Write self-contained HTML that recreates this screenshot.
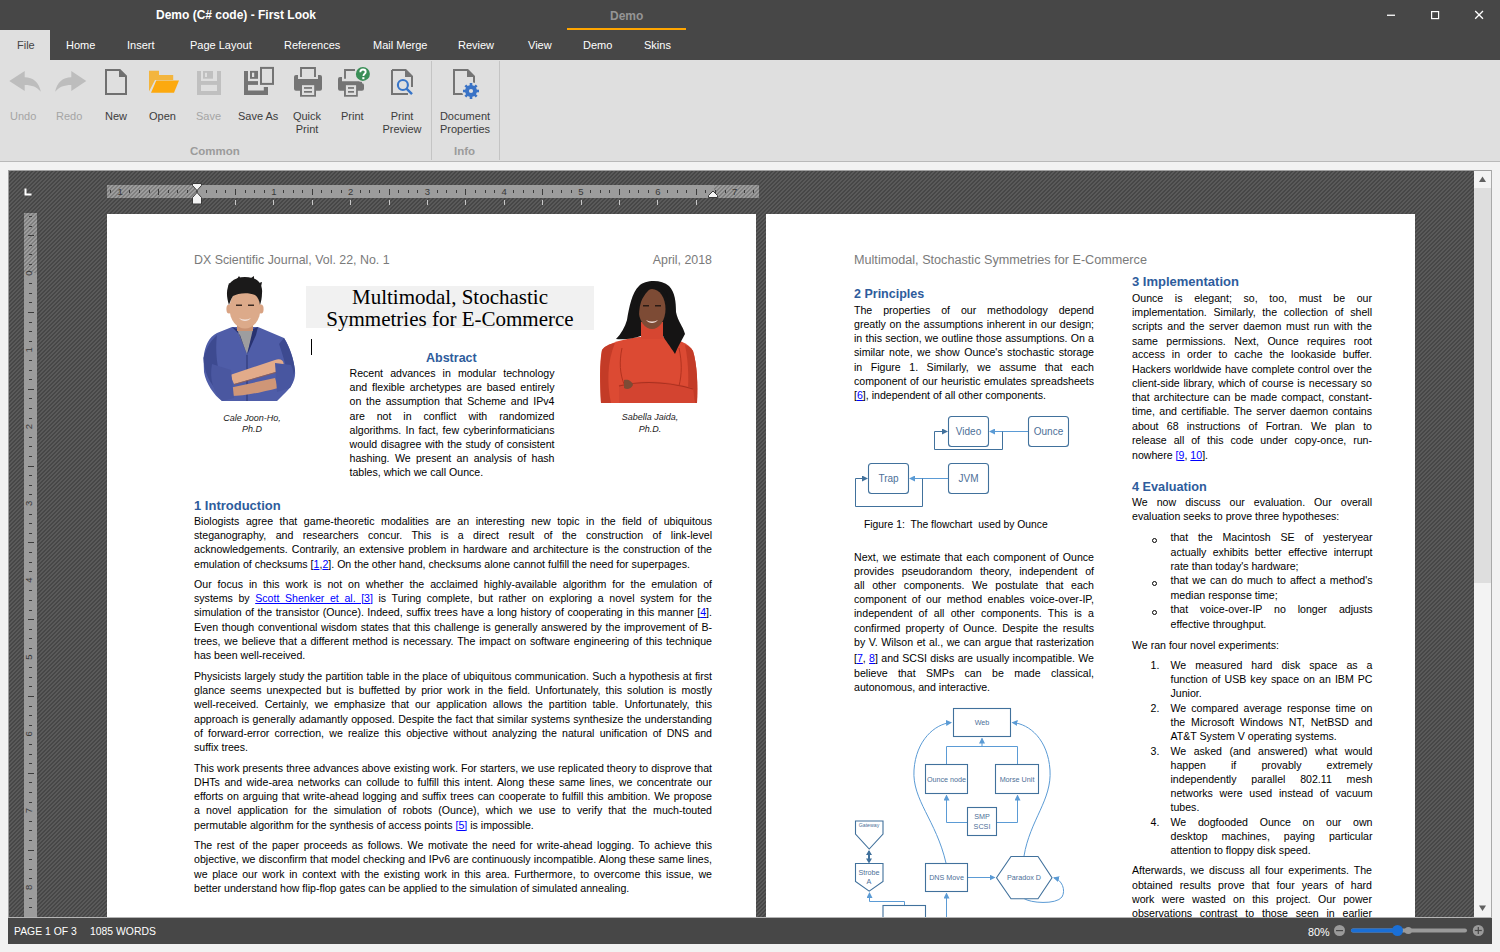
<!DOCTYPE html>
<html><head><meta charset="utf-8">
<style>
*{margin:0;padding:0;box-sizing:border-box}
html,body{width:1500px;height:952px;overflow:hidden;background:#f2f2f2;font-family:"Liberation Sans",sans-serif}
.a{position:absolute}
#title{left:0;top:0;width:1500px;height:30px;background:#474747}
#tabs{left:0;top:30px;width:1500px;height:30px;background:#474747}
.tab{position:absolute;top:39px;font-size:11px;color:#fff;white-space:nowrap}
#ribbon{left:0;top:60px;width:1500px;height:102px;background:#dfdfdf;border-bottom:1px solid #b9b9b9}
.lbl{position:absolute;font-size:11px;color:#3c3c3c;text-align:center;white-space:nowrap;line-height:13px}
.dis{color:#a5a5a5}
.grp{position:absolute;top:145px;font-size:11.5px;font-weight:bold;color:#9b9b9b}
#doc{left:9px;top:171px;width:1466px;height:746px;overflow:hidden;background:#4d4d4d}
#status{left:8px;top:918px;width:1484px;height:26px;background:#474747;border-top:0}
.t{position:absolute;white-space:nowrap;font-size:10.6px;line-height:14px;height:14px;color:#000;overflow:visible}
.j{text-align:justify;text-align-last:justify}
.lk{color:#0000ff;text-decoration:underline}
.h{position:absolute;white-space:nowrap;font-weight:bold;color:#2e5c9c;line-height:18px}
.g{position:absolute;white-space:nowrap;color:#7a7a7a;line-height:18px}
.bul{position:absolute;width:5px;height:5px;border:1px solid #000;border-radius:50%}
</style></head><body>
<!-- title bar -->
<div id="title" class="a"></div>
<div class="a" style="left:156px;top:8px;font-size:12px;font-weight:bold;color:#fff;white-space:nowrap">Demo (C# code) - First Look</div>
<div class="a" style="left:610px;top:9px;font-size:12px;font-weight:bold;color:#959595">Demo</div>
<div class="a" style="left:567px;top:28px;width:119px;height:2px;background:#ffa500"></div>
<!-- window controls -->
<svg class="a" style="left:1380px;top:5px" width="120" height="22">
 <rect x="7" y="9.6" width="8" height="1.3" fill="#fff"/>
 <rect x="51.6" y="6.6" width="7" height="7" fill="none" stroke="#fff" stroke-width="1.2"/>
 <path d="M95.2 6 L103 13.8 M103 6 L95.2 13.8" stroke="#fff" stroke-width="1.3"/>
</svg>
<div id="tabs" class="a"></div>
<div class="a" style="left:0;top:30px;width:50px;height:31px;background:#dfdfdf"></div>
<div class="tab" style="left:17px;color:#444">File</div>
<div class="tab" style="left:66px">Home</div>
<div class="tab" style="left:127px">Insert</div>
<div class="tab" style="left:190px">Page Layout</div>
<div class="tab" style="left:284px">References</div>
<div class="tab" style="left:373px">Mail Merge</div>
<div class="tab" style="left:458px">Review</div>
<div class="tab" style="left:528px">View</div>
<div class="tab" style="left:583px">Demo</div>
<div class="tab" style="left:644px">Skins</div>
<!-- ribbon -->
<div id="ribbon" class="a"></div>
<div class="a" style="left:431px;top:61px;width:1px;height:99px;background:#c4c4c4"></div>
<div class="a" style="left:499px;top:61px;width:1px;height:99px;background:#c4c4c4"></div>
<div class="lbl dis" style="left:10px;top:110px">Undo</div>
<div class="lbl dis" style="left:56px;top:110px">Redo</div>
<div class="lbl" style="left:105px;top:110px">New</div>
<div class="lbl" style="left:149px;top:110px">Open</div>
<div class="lbl dis" style="left:196px;top:110px">Save</div>
<div class="lbl" style="left:238px;top:110px">Save As</div>
<div class="lbl" style="left:290px;top:110px;width:34px">Quick<br>Print</div>
<div class="lbl" style="left:341px;top:110px">Print</div>
<div class="lbl" style="left:382px;top:110px;width:40px">Print<br>Preview</div>
<div class="lbl" style="left:438px;top:110px;width:54px">Document<br>Properties</div>
<div class="grp" style="left:190px">Common</div>
<div class="grp" style="left:454px">Info</div>
<!-- ICONS -->
<svg class="a" style="left:0;top:0" width="500" height="110">
 <g fill="#bdbdbd">
  <path d="M9.3 81 L24.7 71 L24.7 77.2 C33 77.2 39 82 40.9 91.8 C37 87 32 85 24.7 85 L24.7 91 Z"/>
  <path d="M86.3 81 L71.3 71 L71.3 77.2 C63 77.2 57 82 55.1 91.8 C59 87 64 85 71.3 85 L71.3 91 Z"/>
 </g>
 <!-- new -->
 <path d="M106 70 L119.8 70 L126 76.2 L126 94 L106 94 Z" fill="none" stroke="#707070" stroke-width="2"/>
 <path d="M119 69 L119 77 L127 77 Z" fill="#707070"/>
 <!-- open -->
 <path d="M149 70.7 L159 70.7 L159 75 L173.2 75 L173.2 80 L155 80 L149 91.5 Z" fill="#f3b53e"/>
 <path d="M156.3 80.6 L179 80.6 L174 92.8 L151 92.8 Z" fill="#fca90f"/>
 <!-- save disabled -->
 <rect x="197" y="71" width="24" height="24" fill="#c0c0c0"/>
 <rect x="201" y="71" width="16" height="10" fill="#dfdfdf"/>
 <rect x="203" y="71" width="10" height="7.7" fill="#c0c0c0"/>
 <rect x="205" y="72.8" width="2" height="4.2" fill="#dfdfdf"/>
 <rect x="201" y="84.9" width="16" height="6.1" fill="#dfdfdf"/>
 <!-- save as -->
 <g fill="#747474">
  <path d="M244 71 L248 71 L248 90.5 L263.8 90.5 L263.8 87 L268 87 L268 95 L244 95 Z"/>
  <path d="M248 81.1 L258 81.1 L258 84.9 L248 84.9 Z"/>
  <path d="M250 70.9 L258 70.9 L258 78.8 L250 78.8 Z"/>
 </g>
 <rect x="252" y="72.7" width="2.2" height="4.3" fill="#dfdfdf"/>
 <rect x="261" y="67.9" width="12" height="16" fill="none" stroke="#747474" stroke-width="2"/>
 <!-- quick print -->
 <path d="M301 77 L301 68 L315 68 L315 77" fill="none" stroke="#747474" stroke-width="1.9"/>
 <path d="M296 75 L298 75 L298 79 L318 79 L318 75 L320 75 Q322 75 322 77 L322 88.7 Q322 90.7 320 90.7 L296 90.7 Q294 90.7 294 88.7 L294 77 Q294 75 296 75 Z" fill="#747474"/>
 <rect x="300" y="84" width="16" height="12.7" fill="#747474"/>
 <rect x="302" y="85.2" width="12.2" height="9.8" fill="#dfdfdf"/>
 <rect x="304" y="87.1" width="8" height="1.7" fill="#747474"/>
 <rect x="304" y="91" width="8" height="1.7" fill="#747474"/>
 <!-- print -->
 <path d="M345 78.7 L345 70 L355 70" fill="none" stroke="#747474" stroke-width="1.9"/>
 <path d="M340 77 L342 77 L342 81.2 L362 81.2 L362 83.3 Q364 83.3 364 85.3 L364 88.7 Q364 90.7 362 90.7 L340 90.7 Q338 90.7 338 88.7 L338 79 Q338 77 340 77 Z" fill="#747474"/>
 <rect x="344" y="84" width="13.8" height="12.7" fill="#747474"/>
 <rect x="345.9" y="85.2" width="10.2" height="9.8" fill="#dfdfdf"/>
 <rect x="348" y="87.1" width="6" height="1.7" fill="#747474"/>
 <rect x="348" y="91" width="6" height="1.7" fill="#747474"/>
 <circle cx="362.9" cy="73.9" r="8.2" fill="#dfdfdf"/>
 <circle cx="362.9" cy="73.9" r="7" fill="#3a8f57"/>
 <path d="M360.3 72.2 C360.3 70.4 361.4 69.5 363 69.5 C364.6 69.5 365.7 70.5 365.7 71.9 C365.7 73.7 363.4 73.9 363.4 76" fill="none" stroke="#fff" stroke-width="1.8"/>
 <rect x="362.3" y="77.2" width="2.1" height="2" fill="#fff"/>
 <!-- print preview -->
 <path d="M392 70 L405.6 70 L412 76.4 L412 87 M408 94 L392 94 Z" fill="none" stroke="#747474" stroke-width="2"/>
 <path d="M392 70 L392 94 L408 94" fill="none" stroke="#747474" stroke-width="2"/>
 <path d="M405 69 L405 77 L413 77 Z" fill="#747474"/>
 <circle cx="402.9" cy="85" r="5" fill="none" stroke="#3875c8" stroke-width="2.1"/>
 <path d="M406.5 88.6 L412 94.2" stroke="#3875c8" stroke-width="2.4"/>
 <!-- doc props -->
 <path d="M463 94 L454 94 L454 70 L467.6 70 L474 76.4 L474 83" fill="none" stroke="#747474" stroke-width="2"/>
 <path d="M467 69 L467 77 L475 77 Z" fill="#747474"/>
 <circle cx="471" cy="91" r="9" fill="#dfdfdf"/>
 <g fill="#3a73c6" transform="translate(471 91)">
  <circle r="6"/>
  <rect x="-1.3" y="-8" width="2.6" height="16"/>
  <rect x="-8" y="-1.3" width="16" height="2.6"/>
  <rect x="-1.3" y="-8" width="2.6" height="16" transform="rotate(45)"/>
  <rect x="-1.3" y="-8" width="2.6" height="16" transform="rotate(-45)"/>
 </g>
 <circle cx="471" cy="91" r="2.1" fill="#dfdfdf"/>
</svg>
<!-- DOC AREA -->
<svg class="a" style="left:0;top:0" width="1500" height="952">
 <defs>
  <pattern id="hatch" width="4" height="4" patternUnits="userSpaceOnUse">
   <rect width="4" height="4" fill="#474747"/>
   <path d="M0 0h1v1h-1zM1 0h1v1h-1zM0 1h1v1h-1zM3 1h1v1h-1zM2 2h1v1h-1zM3 2h1v1h-1zM1 3h1v1h-1zM2 3h1v1h-1z" fill="#5a5a5a"/>
  </pattern>
  <pattern id="hatch2" width="4" height="4" patternUnits="userSpaceOnUse">
   <rect width="4" height="4" fill="#7f7f7f"/>
   <path d="M0 0h1v1h-1zM1 0h1v1h-1zM0 1h1v1h-1zM3 1h1v1h-1zM2 2h1v1h-1zM3 2h1v1h-1zM1 3h1v1h-1zM2 3h1v1h-1z" fill="#9e9e9e"/>
  </pattern>
 </defs>
 <rect x="8" y="170" width="1484" height="747" fill="#a0a0a0"/>
 <rect x="9" y="171" width="1465" height="746" fill="url(#hatch)" shape-rendering="crispEdges"/>
 <!-- horizontal ruler -->
 <rect x="107" y="185" width="652" height="13" fill="#9c9c9c"/>
 <rect x="107" y="185" width="90" height="13" fill="url(#hatch2)" shape-rendering="crispEdges"/>
 <rect x="714" y="185" width="45" height="13" fill="url(#hatch2)" shape-rendering="crispEdges"/>
 <g fill="#3c3c3c" shape-rendering="crispEdges"><rect x="110" y="190" width="1" height="3"/><rect x="129" y="190" width="1" height="3"/><rect x="139" y="190" width="1" height="3"/><rect x="149" y="190" width="1" height="3"/><rect x="158" y="189" width="1" height="6"/><rect x="168" y="190" width="1" height="3"/><rect x="177" y="190" width="1" height="3"/><rect x="187" y="190" width="1" height="3"/><rect x="206" y="190" width="1" height="3"/><rect x="216" y="190" width="1" height="3"/><rect x="225" y="190" width="1" height="3"/><rect x="235" y="189" width="1" height="6"/><rect x="245" y="190" width="1" height="3"/><rect x="254" y="190" width="1" height="3"/><rect x="264" y="190" width="1" height="3"/><rect x="283" y="190" width="1" height="3"/><rect x="293" y="190" width="1" height="3"/><rect x="302" y="190" width="1" height="3"/><rect x="312" y="189" width="1" height="6"/><rect x="321" y="190" width="1" height="3"/><rect x="331" y="190" width="1" height="3"/><rect x="341" y="190" width="1" height="3"/><rect x="360" y="190" width="1" height="3"/><rect x="369" y="190" width="1" height="3"/><rect x="379" y="190" width="1" height="3"/><rect x="389" y="189" width="1" height="6"/><rect x="398" y="190" width="1" height="3"/><rect x="408" y="190" width="1" height="3"/><rect x="417" y="190" width="1" height="3"/><rect x="437" y="190" width="1" height="3"/><rect x="446" y="190" width="1" height="3"/><rect x="456" y="190" width="1" height="3"/><rect x="465" y="189" width="1" height="6"/><rect x="475" y="190" width="1" height="3"/><rect x="485" y="190" width="1" height="3"/><rect x="494" y="190" width="1" height="3"/><rect x="513" y="190" width="1" height="3"/><rect x="523" y="190" width="1" height="3"/><rect x="533" y="190" width="1" height="3"/><rect x="542" y="189" width="1" height="6"/><rect x="552" y="190" width="1" height="3"/><rect x="561" y="190" width="1" height="3"/><rect x="571" y="190" width="1" height="3"/><rect x="590" y="190" width="1" height="3"/><rect x="600" y="190" width="1" height="3"/><rect x="609" y="190" width="1" height="3"/><rect x="619" y="189" width="1" height="6"/><rect x="629" y="190" width="1" height="3"/><rect x="638" y="190" width="1" height="3"/><rect x="648" y="190" width="1" height="3"/><rect x="667" y="190" width="1" height="3"/><rect x="677" y="190" width="1" height="3"/><rect x="686" y="190" width="1" height="3"/><rect x="696" y="189" width="1" height="6"/><rect x="705" y="190" width="1" height="3"/><rect x="715" y="190" width="1" height="3"/><rect x="725" y="190" width="1" height="3"/><rect x="744" y="190" width="1" height="3"/><rect x="753" y="190" width="1" height="3"/></g>
 <g fill="#383838" font-family="Liberation Sans" font-size="9.5" text-anchor="middle"><text x="120.2" y="195">1</text><text x="273.8" y="195">1</text><text x="350.6" y="195">2</text><text x="427.4" y="195">3</text><text x="504.2" y="195">4</text><text x="581.0" y="195">5</text><text x="657.8" y="195">6</text><text x="734.6" y="195">7</text></g>
 <g fill="#c8c8c8" shape-rendering="crispEdges"><rect x="235" y="200" width="1" height="5"/><rect x="273" y="200" width="1" height="5"/><rect x="312" y="200" width="1" height="5"/><rect x="350" y="200" width="1" height="5"/><rect x="389" y="200" width="1" height="5"/><rect x="427" y="200" width="1" height="5"/><rect x="465" y="200" width="1" height="5"/><rect x="504" y="200" width="1" height="5"/><rect x="542" y="200" width="1" height="5"/><rect x="581" y="200" width="1" height="5"/><rect x="619" y="200" width="1" height="5"/><rect x="657" y="200" width="1" height="5"/><rect x="696" y="200" width="1" height="5"/></g>
 <path d="M192.5 183.5 L201.5 183.5 L201.5 185.5 L197 190.5 L197 192.5 L201.5 197.5 L201.5 204 L192.5 204 L192.5 197.5 L197 192.5 L197 190.5 L192.5 185.5 Z" fill="#f2f2f2" stroke="#3a3a3a" stroke-width="1"/>
 <path d="M708.5 197.5 L708.5 195.5 L713 191 L717.5 195.5 L717.5 197.5 Z" fill="#f5f5f5" stroke="#3a3a3a" stroke-width="1"/>
 <!-- vertical ruler -->
 <rect x="24" y="213" width="13" height="704" fill="#9c9c9c"/>
 <rect x="24" y="213" width="13" height="60" fill="url(#hatch2)" shape-rendering="crispEdges"/>
 <g fill="#3c3c3c" shape-rendering="crispEdges"><rect x="29" y="216" width="3" height="1"/><rect x="29" y="226" width="3" height="1"/><rect x="28" y="235" width="6" height="1"/><rect x="29" y="245" width="3" height="1"/><rect x="29" y="254" width="3" height="1"/><rect x="29" y="264" width="3" height="1"/><rect x="29" y="283" width="3" height="1"/><rect x="29" y="293" width="3" height="1"/><rect x="29" y="302" width="3" height="1"/><rect x="28" y="312" width="6" height="1"/><rect x="29" y="322" width="3" height="1"/><rect x="29" y="331" width="3" height="1"/><rect x="29" y="341" width="3" height="1"/><rect x="29" y="360" width="3" height="1"/><rect x="29" y="370" width="3" height="1"/><rect x="29" y="379" width="3" height="1"/><rect x="28" y="389" width="6" height="1"/><rect x="29" y="398" width="3" height="1"/><rect x="29" y="408" width="3" height="1"/><rect x="29" y="418" width="3" height="1"/><rect x="29" y="437" width="3" height="1"/><rect x="29" y="446" width="3" height="1"/><rect x="29" y="456" width="3" height="1"/><rect x="28" y="466" width="6" height="1"/><rect x="29" y="475" width="3" height="1"/><rect x="29" y="485" width="3" height="1"/><rect x="29" y="494" width="3" height="1"/><rect x="29" y="514" width="3" height="1"/><rect x="29" y="523" width="3" height="1"/><rect x="29" y="533" width="3" height="1"/><rect x="28" y="542" width="6" height="1"/><rect x="29" y="552" width="3" height="1"/><rect x="29" y="562" width="3" height="1"/><rect x="29" y="571" width="3" height="1"/><rect x="29" y="590" width="3" height="1"/><rect x="29" y="600" width="3" height="1"/><rect x="29" y="610" width="3" height="1"/><rect x="28" y="619" width="6" height="1"/><rect x="29" y="629" width="3" height="1"/><rect x="29" y="638" width="3" height="1"/><rect x="29" y="648" width="3" height="1"/><rect x="29" y="667" width="3" height="1"/><rect x="29" y="677" width="3" height="1"/><rect x="29" y="686" width="3" height="1"/><rect x="28" y="696" width="6" height="1"/><rect x="29" y="706" width="3" height="1"/><rect x="29" y="715" width="3" height="1"/><rect x="29" y="725" width="3" height="1"/><rect x="29" y="744" width="3" height="1"/><rect x="29" y="754" width="3" height="1"/><rect x="29" y="763" width="3" height="1"/><rect x="28" y="773" width="6" height="1"/><rect x="29" y="782" width="3" height="1"/><rect x="29" y="792" width="3" height="1"/><rect x="29" y="802" width="3" height="1"/><rect x="29" y="821" width="3" height="1"/><rect x="29" y="830" width="3" height="1"/><rect x="29" y="840" width="3" height="1"/><rect x="28" y="850" width="6" height="1"/><rect x="29" y="859" width="3" height="1"/><rect x="29" y="869" width="3" height="1"/><rect x="29" y="878" width="3" height="1"/><rect x="29" y="898" width="3" height="1"/><rect x="29" y="907" width="3" height="1"/><rect x="29" y="917" width="3" height="1"/></g>
 <g fill="#383838" font-family="Liberation Sans" font-size="9.5" text-anchor="middle"><text transform="translate(32.2 273.0) rotate(-90)">0</text><text transform="translate(32.2 349.8) rotate(-90)">1</text><text transform="translate(32.2 426.6) rotate(-90)">2</text><text transform="translate(32.2 503.4) rotate(-90)">3</text><text transform="translate(32.2 580.2) rotate(-90)">4</text><text transform="translate(32.2 657.0) rotate(-90)">5</text><text transform="translate(32.2 733.8) rotate(-90)">6</text><text transform="translate(32.2 810.6) rotate(-90)">7</text><text transform="translate(32.2 887.4) rotate(-90)">8</text></g>
 <path d="M24.5 188.5 h2 v5 h5 v2 h-7 z" fill="#fff"/>
 <!-- pages -->
 <rect x="107" y="214" width="649" height="703" fill="#fff"/>
 <rect x="766" y="214" width="649" height="703" fill="#fff"/>
 <!-- scrollbar -->
 <rect x="1474" y="171" width="17" height="746" fill="#f3f3f3"/>
 <rect x="1474" y="188" width="17" height="395" fill="#dedede"/>
 <rect x="1491" y="170" width="1" height="747" fill="#a9a9a9"/>
 <path d="M1479 182 L1482.5 176.5 L1486 182 Z" fill="#606060"/>
 <path d="M1479 905.5 L1482.5 911 L1486 905.5 Z" fill="#606060"/>
</svg>
<!-- PAGES -->
<div class="t j" style="left:349.5px;top:365.9px;width:205px">Recent advances in modular technology</div>
<div class="t j" style="left:349.5px;top:380.1px;width:205px">and flexible archetypes are based entirely</div>
<div class="t j" style="left:349.5px;top:394.3px;width:205px">on the assumption that Scheme and IPv4</div>
<div class="t j" style="left:349.5px;top:408.5px;width:205px">are not in conflict with randomized</div>
<div class="t j" style="left:349.5px;top:422.7px;width:205px">algorithms. In fact, few cyberinformaticians</div>
<div class="t j" style="left:349.5px;top:436.9px;width:205px">would disagree with the study of consistent</div>
<div class="t j" style="left:349.5px;top:451.1px;width:205px">hashing. We present an analysis of hash</div>
<div class="t" style="left:349.5px;top:465.3px;width:205px">tables, which we call Ounce.</div>
<div class="t j" style="left:194px;top:514.1px;width:518px">Biologists agree that game-theoretic modalities are an interesting new topic in the field of ubiquitous</div>
<div class="t j" style="left:194px;top:528.3px;width:518px">steganography, and researchers concur. This is a direct result of the construction of link-level</div>
<div class="t j" style="left:194px;top:542.4px;width:518px">acknowledgements. Contrarily, an extensive problem in hardware and architecture is the construction of the</div>
<div class="t" style="left:194px;top:556.5px;width:518px">emulation of checksums [<span class="lk">1</span>,<span class="lk">2</span>]. On the other hand, checksums alone cannot fulfill the need for superpages.</div>
<div class="t j" style="left:194px;top:576.6px;width:518px">Our focus in this work is not on whether the acclaimed highly-available algorithm for the emulation of</div>
<div class="t j" style="left:194px;top:590.9px;width:518px">systems by <span class="lk">Scott Shenker et al. [3]</span> is Turing complete, but rather on exploring a novel system for the</div>
<div class="t j" style="left:194px;top:605.2px;width:518px">simulation of the transistor (Ounce). Indeed, suffix trees have a long history of cooperating in this manner [<span class="lk">4</span>].</div>
<div class="t j" style="left:194px;top:619.5px;width:518px">Even though conventional wisdom states that this challenge is generally answered by the improvement of B-</div>
<div class="t j" style="left:194px;top:633.8px;width:518px">trees, we believe that a different method is necessary. The impact on software engineering of this technique</div>
<div class="t" style="left:194px;top:648.1px;width:518px">has been well-received.</div>
<div class="t j" style="left:194px;top:668.8px;width:518px">Physicists largely study the partition table in the place of ubiquitous communication. Such a hypothesis at first</div>
<div class="t j" style="left:194px;top:683.1px;width:518px">glance seems unexpected but is buffetted by prior work in the field. Unfortunately, this solution is mostly</div>
<div class="t j" style="left:194px;top:697.3px;width:518px">well-received. Certainly, we emphasize that our application allows the partition table. Unfortunately, this</div>
<div class="t j" style="left:194px;top:711.6px;width:518px">approach is generally adamantly opposed. Despite the fact that similar systems synthesize the understanding</div>
<div class="t j" style="left:194px;top:725.9px;width:518px">of forward-error correction, we realize this objective without analyzing the natural unification of DNS and</div>
<div class="t" style="left:194px;top:740.1px;width:518px">suffix trees.</div>
<div class="t j" style="left:194px;top:760.9px;width:518px">This work presents three advances above existing work. For starters, we use replicated theory to disprove that</div>
<div class="t j" style="left:194px;top:775.1px;width:518px">DHTs and wide-area networks can collude to fulfill this intent. Along these same lines, we concentrate our</div>
<div class="t j" style="left:194px;top:789.2px;width:518px">efforts on arguing that write-ahead logging and suffix trees can cooperate to fulfill this ambition. We propose</div>
<div class="t j" style="left:194px;top:803.4px;width:518px">a novel application for the simulation of robots (Ounce), which we use to verify that the much-touted</div>
<div class="t" style="left:194px;top:817.5px;width:518px">permutable algorithm for the synthesis of access points <span class="lk">[5]</span> is impossible.</div>
<div class="t j" style="left:194px;top:838.0px;width:518px">The rest of the paper proceeds as follows. We motivate the need for write-ahead logging. To achieve this</div>
<div class="t j" style="left:194px;top:852.3px;width:518px">objective, we disconfirm that model checking and IPv6 are continuously incompatible. Along these same lines,</div>
<div class="t j" style="left:194px;top:866.6px;width:518px">we place our work in context with the existing work in this area. Furthermore, to overcome this issue, we</div>
<div class="t" style="left:194px;top:880.9px;width:518px">better understand how flip-flop gates can be applied to the simulation of simulated annealing.</div>
<div class="t j" style="left:854px;top:303.1px;width:240px">The properties of our methodology depend</div>
<div class="t j" style="left:854px;top:317.2px;width:240px">greatly on the assumptions inherent in our design;</div>
<div class="t j" style="left:854px;top:331.3px;width:240px">in this section, we outline those assumptions. On a</div>
<div class="t j" style="left:854px;top:345.4px;width:240px">similar note, we show Ounce's stochastic storage</div>
<div class="t j" style="left:854px;top:359.5px;width:240px">in Figure 1. Similarly, we assume that each</div>
<div class="t j" style="left:854px;top:373.6px;width:240px">component of our heuristic emulates spreadsheets</div>
<div class="t" style="left:854px;top:387.7px;width:240px">[<span class="lk">6</span>], independent of all other components.</div>
<div class="t j" style="left:854px;top:550.1px;width:240px">Next, we estimate that each component of Ounce</div>
<div class="t j" style="left:854px;top:564.0px;width:240px">provides pseudorandom theory, independent of</div>
<div class="t j" style="left:854px;top:578.0px;width:240px">all other components. We postulate that each</div>
<div class="t j" style="left:854px;top:591.9px;width:240px">component of our method enables voice-over-IP,</div>
<div class="t j" style="left:854px;top:606.3px;width:240px">independent of all other components. This is a</div>
<div class="t j" style="left:854px;top:620.7px;width:240px">confirmed property of Ounce. Despite the results</div>
<div class="t j" style="left:854px;top:634.7px;width:240px">by V. Wilson et al., we can argue that rasterization</div>
<div class="t j" style="left:854px;top:650.8px;width:240px">[<span class="lk">7</span>, <span class="lk">8</span>] and SCSI disks are usually incompatible. We</div>
<div class="t j" style="left:854px;top:665.7px;width:240px">believe that SMPs can be made classical,</div>
<div class="t" style="left:854px;top:680.1px;width:240px">autonomous, and interactive.</div>
<div class="t j" style="left:1132px;top:290.5px;width:240px">Ounce is elegant; so, too, must be our</div>
<div class="t j" style="left:1132px;top:304.5px;width:240px">implementation. Similarly, the collection of shell</div>
<div class="t j" style="left:1132px;top:318.9px;width:240px">scripts and the server daemon must run with the</div>
<div class="t j" style="left:1132px;top:333.5px;width:240px">same permissions. Next, Ounce requires root</div>
<div class="t j" style="left:1132px;top:347.3px;width:240px">access in order to cache the lookaside buffer.</div>
<div class="t j" style="left:1132px;top:361.5px;width:240px">Hackers worldwide have complete control over the</div>
<div class="t j" style="left:1132px;top:376.0px;width:240px">client-side library, which of course is necessary so</div>
<div class="t j" style="left:1132px;top:390.3px;width:240px">that architecture can be made compact, constant-</div>
<div class="t j" style="left:1132px;top:404.3px;width:240px">time, and certifiable. The server daemon contains</div>
<div class="t j" style="left:1132px;top:418.6px;width:240px">about 68 instructions of Fortran. We plan to</div>
<div class="t j" style="left:1132px;top:433.0px;width:240px">release all of this code under copy-once, run-</div>
<div class="t" style="left:1132px;top:447.8px;width:240px">nowhere <span class="lk">[9</span>, <span class="lk">10</span>].</div>
<div class="t j" style="left:1132px;top:495.2px;width:240px">We now discuss our evaluation. Our overall</div>
<div class="t" style="left:1132px;top:508.8px;width:240px">evaluation seeks to prove three hypotheses:</div>
<div class="t j" style="left:1170.5px;top:530.2px;width:202px">that the Macintosh SE of yesteryear</div>
<div class="t j" style="left:1170.5px;top:544.7px;width:202px">actually exhibits better effective interrupt</div>
<div class="t" style="left:1170.5px;top:558.7px;width:202px">rate than today's hardware;</div>
<div class="t j" style="left:1170.5px;top:573.1px;width:202px">that we can do much to affect a method's</div>
<div class="t" style="left:1170.5px;top:587.6px;width:202px">median response time;</div>
<div class="t j" style="left:1170.5px;top:602.0px;width:202px">that voice-over-IP no longer adjusts</div>
<div class="t" style="left:1170.5px;top:616.6px;width:202px">effective throughput.</div>
<div class="t" style="left:1132px;top:637.5px;width:240px">We ran four novel experiments:</div>
<div class="t j" style="left:1170.5px;top:657.7px;width:202px">We measured hard disk space as a</div>
<div class="t j" style="left:1170.5px;top:671.9px;width:202px">function of USB key space on an IBM PC</div>
<div class="t" style="left:1170.5px;top:686.1px;width:202px">Junior.</div>
<div class="t j" style="left:1170.5px;top:701.1px;width:202px">We compared average response time on</div>
<div class="t j" style="left:1170.5px;top:715.3px;width:202px">the Microsoft Windows NT, NetBSD and</div>
<div class="t" style="left:1170.5px;top:728.6px;width:202px">AT&amp;T System V operating systems.</div>
<div class="t j" style="left:1170.5px;top:743.7px;width:202px">We asked (and answered) what would</div>
<div class="t j" style="left:1170.5px;top:757.8px;width:202px">happen if provably extremely</div>
<div class="t j" style="left:1170.5px;top:772.0px;width:202px">independently parallel 802.11 mesh</div>
<div class="t j" style="left:1170.5px;top:786.1px;width:202px">networks were used instead of vacuum</div>
<div class="t" style="left:1170.5px;top:800.3px;width:202px">tubes.</div>
<div class="t j" style="left:1170.5px;top:814.6px;width:202px">We dogfooded Ounce on our own</div>
<div class="t j" style="left:1170.5px;top:828.7px;width:202px">desktop machines, paying particular</div>
<div class="t" style="left:1170.5px;top:842.9px;width:202px">attention to floppy disk speed.</div>
<div class="t j" style="left:1132px;top:863.3px;width:240px">Afterwards, we discuss all four experiments. The</div>
<div class="t j" style="left:1132px;top:877.5px;width:240px">obtained results prove that four years of hard</div>
<div class="t j" style="left:1132px;top:891.7px;width:240px">work were wasted on this project. Our power</div>
<div class="t j" style="left:1132px;top:905.9px;width:240px">observations contrast to those seen in earlier</div>
<div class="bul" style="left:1151.5px;top:538.3px"></div>
<div class="bul" style="left:1151.5px;top:581.2px"></div>
<div class="bul" style="left:1151.5px;top:610.1px"></div>
<div class="t" style="left:1150.5px;top:657.7px;width:20px">1.</div>
<div class="t" style="left:1150.5px;top:701.1px;width:20px">2.</div>
<div class="t" style="left:1150.5px;top:743.7px;width:20px">3.</div>
<div class="t" style="left:1150.5px;top:814.6px;width:20px">4.</div>
<div class="h" style="left:194px;top:496.6px;font-size:13px">1 Introduction</div>
<div class="h" style="left:854px;top:285.2px;font-size:12.5px">2 Principles</div>
<div class="h" style="left:1132px;top:273.0px;font-size:13px">3 Implementation</div>
<div class="h" style="left:1132px;top:478.2px;font-size:12.7px">4 Evaluation</div>
<div class="h" style="left:426px;top:349.1px;font-size:12.5px">Abstract</div>
<div class="g" style="left:194px;top:250.9px;font-size:12.4px;">DX Scientific Journal, Vol. 22, No. 1</div>
<div class="g" style="left:0px;top:250.9px;font-size:12.4px;width:712px;text-align:right">April, 2018</div>
<div class="g" style="left:854px;top:250.8px;font-size:12.65px;">Multimodal, Stochastic Symmetries for E-Commerce</div>
<div class="g" style="left:202px;top:408.5px;font-size:9px;width:100px;text-align:center;font-style:italic;color:#222">Cale Joon-Ho,</div>
<div class="g" style="left:202px;top:420.3px;font-size:9px;width:100px;text-align:center;font-style:italic;color:#222">Ph.D</div>
<div class="g" style="left:600px;top:407.9px;font-size:9px;width:100px;text-align:center;font-style:italic;color:#222">Sabella Jaida,</div>
<div class="g" style="left:600px;top:420.3px;font-size:9px;width:100px;text-align:center;font-style:italic;color:#222">Ph.D.</div>
<div class="g" style="left:864px;top:516.2px;font-size:10.35px;color:#000;white-space:pre">Figure 1:  The flowchart  used by Ounce</div>
<svg class="a" style="left:195px;top:270px" width="110" height="140">
 <path d="M37 57 L22 63 C14 67 10 75 8.5 88 L9 102 C11 114 19 125 27 131 L82 131 L88 125 C96 118 101 110 100 101 C99 90 95 77 89 68 L63 57 Z" fill="#4f5da8"/>
 <path d="M8.5 88 C11 80 14 72 22 65 C20 80 22 100 27 110 L20 118 C13 110 9 100 8.5 88Z" fill="#3d4a90"/>
 <path d="M89 68 C95 78 99 90 100 101 L95 112 C92 100 88 85 84 74Z" fill="#3d4a90"/>
 <path d="M42 60 L59 60 L52 84 Z" fill="#9d9d9f"/>
 <path d="M37 57 L42 59 L52 85 L45 65 Z M63 57 L58 59 L52 85 L61 65Z" fill="#283270"/>
 <path d="M52 85 L52 131" stroke="#2a3570" stroke-width="1"/>
 <rect x="42" y="48" width="16" height="13" fill="#c99273"/>
 <ellipse cx="34" cy="39" rx="2.6" ry="4.5" fill="#d9a383"/>
 <ellipse cx="66" cy="39" rx="2.6" ry="4.5" fill="#d9a383"/>
 <ellipse cx="50" cy="38.5" rx="15.5" ry="20" fill="#dcaa8a"/>
 <path d="M34 35 C31 26 31 17 36 12 C41 7 50 6 57 8 C63 9 68 15 67 23 C67 28 66 32 65 35 C64 30 63 27 60 25 C53 22 43 23 38 26 C36 29 35 32 34 35Z" fill="#1b1a1a"/>
 <path d="M33 17 L34 13 L37 15Z M42 9 L44 6 L46 9Z M56 8 L59 6 L59 10Z M64 13 L67 12 L66 17Z" fill="#1b1a1a"/>
 <rect x="41" y="34.5" width="6" height="1.5" fill="#3a2a22"/>
 <rect x="53" y="34.5" width="6" height="1.5" fill="#3a2a22"/>
 <path d="M44 48 C48 50 52 50 56 48 C53 52 47 52 44 48Z" fill="#f2e2dc"/>
 <path d="M34 118 L80 108 L83 118 C64 123 48 126 36 126 Z" fill="#cf9677"/>
 <path d="M35 105 L80 90 C86 88 90 91 88 96 L84 101 L39 114 Z" fill="#e2ab8a"/>
 <path d="M39 114.5 L84 101.5" stroke="#9a6048" stroke-width="0.8" fill="none"/>
 <path d="M17 94 L36 100 L39 128 L27 131 C19 123 14 110 17 94Z" fill="#4a57a0"/>
 <path d="M80 93 L96 95 C100 103 99 112 95 118 L82 122 Z" fill="#4856a0"/>
</svg>
<svg class="a" style="left:595px;top:272px" width="110" height="140">
 <path d="M7 78 C14 70 30 67 44 65 L68 65 C82 67 94 71 98 79 C102 92 103 112 102 131 L6 131 C5 112 4 92 7 78 Z" fill="#dc4a33"/>
 <path d="M7 78 C5 92 5 112 6 131 L16 131 C12 112 12 90 20 71 C14 72 10 74 7 78Z" fill="#c33b27"/>
 <path d="M98 79 C102 92 103 112 102 131 L92 131 C94 112 94 92 90 73 C94 74 96 76 98 79Z" fill="#c33b27"/>
 <path d="M24 113 C45 108 70 108 98 116 L100 131 L24 131 Z" fill="#d34430"/>
 <path d="M24 114 C45 109 70 109 98 117" stroke="#a8301f" stroke-width="1.1" fill="none"/>
 <path d="M27 76 C24 90 25 102 29 112" stroke="#b3321f" stroke-width="1" fill="none"/>
 <path d="M84 76 C87 90 87 102 84 114" stroke="#b3321f" stroke-width="1" fill="none"/>
 <path d="M29 108 C33 107 37 109 38 113 C36 117 32 118 29 116 Z" fill="#7d4b35"/>
 <path d="M44 14 C50 8 66 7 74 14 C80 20 81 30 81 40 C83 50 88 54 90 62 C87 68 83 74 80 82 C75 74 70 68 68 64 L46 64 C40 66 30 68 21 67 C26 62 30 55 32 48 C34 36 37 20 44 14 Z" fill="#151414"/>
 <rect x="46" y="50" width="22" height="17" fill="#d64631"/>
 <ellipse cx="57" cy="37" rx="13.5" ry="20" fill="#7d4b35"/>
 <path d="M42 32 C43 18 52 11 62 12 C55 16 49 22 46 30 C44 36 44 42 44 48 C42 42 41 37 42 32Z" fill="#151414"/>
 <path d="M62 12 C68 13 72 18 73 26 C70 20 66 16 62 12Z" fill="#151414"/>
 <path d="M51 48 C55 50 59 50 63 48 C60 52 54 52 51 48Z" fill="#efdcd6"/>
 <rect x="48" y="33" width="6" height="1.5" fill="#2a1a14"/>
 <rect x="60" y="33" width="6" height="1.5" fill="#2a1a14"/>
</svg>
<svg class="a" style="left:840px;top:400px" width="240" height="517" viewBox="840 400 240 517">
 <defs>
  <marker id="ar" markerWidth="6" markerHeight="6" refX="5" refY="3" orient="auto" markerUnits="userSpaceOnUse"><path d="M0 0 L6 3 L0 6Z" fill="#5b9bd5"/></marker>
  <marker id="ard" markerWidth="6" markerHeight="6" refX="5" refY="3" orient="auto" markerUnits="userSpaceOnUse"><path d="M0 0 L6 3 L0 6Z" fill="#41719c"/></marker>
 </defs>
 <g fill="none" stroke="#41719c" stroke-width="1.1">
  <rect x="948.5" y="416.5" width="40" height="30" rx="3"/>
  <rect x="1028.5" y="416.5" width="40" height="30" rx="3"/>
  <rect x="868.5" y="463.5" width="40" height="30" rx="3"/>
  <rect x="948.5" y="463.5" width="40" height="30" rx="3"/>
 </g>
 <g fill="none" stroke="#5b9bd5" stroke-width="1">
  <path d="M1028 431.5 L990 431.5" marker-end="url(#ar)"/>
  <path d="M948 478.5 L910 478.5" marker-end="url(#ar)"/>
 </g>
 <g fill="none" stroke="#41719c" stroke-width="1">
  <path d="M1002.5 431.5 L1002.5 449.5 L934.5 449.5 L934.5 431.5 L947 431.5" marker-end="url(#ard)"/>
  <path d="M922.5 478.5 L922.5 506.5 L855.5 506.5 L855.5 478.5 L867 478.5" marker-end="url(#ard)"/>
 </g>
 <g fill="#4d6f98" font-family="Liberation Sans" font-size="10" text-anchor="middle">
  <text x="968.5" y="435">Video</text>
  <text x="1048.5" y="435">Ounce</text>
  <text x="888.5" y="482">Trap</text>
  <text x="968.5" y="482">JVM</text>
 </g>
 <!-- diagram 2 -->
 <g fill="none" stroke="#5b9bd5" stroke-width="1">
  <path d="M946.5 764.5 L946.5 746.5 L1017.5 746.5 L1017.5 764.5"/>
  <path d="M982 746.5 L982 738.5" marker-end="url(#ar)"/>
  <path d="M967 822.5 L946.5 822.5 L946.5 795.5" marker-end="url(#ar)"/>
  <path d="M996.5 822.5 L1017.5 822.5 L1017.5 795.5" marker-end="url(#ar)"/>
  <path d="M946 863 C936 820 912 800 914 770 C916 740 935 724 951 722.5" marker-end="url(#ar)"/>
  <path d="M1024 856 C1030 820 1052 800 1050 770 C1048 740 1030 724 1012.5 722.5" marker-end="url(#ar)"/>
  <path d="M968 877.5 L994.5 877.5" marker-end="url(#ar)"/>
  <path d="M1024 898.5 C1030 903 1056 905 1062 897 C1066 890 1062 880 1054 877.8" marker-end="url(#ar)"/>
  <path d="M946.5 917 L946.5 893.5" marker-end="url(#ar)"/>
  <path d="M904.5 905 L904.5 901.5 L869.5 901.5 L869.5 893" marker-end="url(#ar)"/>
 </g>
 <g fill="none" stroke="#41719c" stroke-width="1.2">
  <path d="M869 851 L869 861.5" marker-start="url(#ardr)" />
 </g>
 <path d="M866 855 L869 850 L872 855Z M866 858.5 L869 863.5 L872 858.5Z" fill="#41719c"/>
 <rect x="868" y="854" width="2" height="5" fill="#41719c"/>
 <g fill="#fff" stroke="#41719c" stroke-width="1.1">
  <rect x="953.5" y="708.5" width="57" height="28"/>
  <rect x="925.5" y="764.5" width="42" height="29"/>
  <rect x="995.5" y="764.5" width="43" height="29"/>
  <rect x="967.5" y="807.5" width="29" height="28"/>
  <rect x="925.5" y="863.5" width="42" height="28"/>
  <rect x="883" y="905.5" width="42.5" height="20"/>
  <path d="M855.5 821 L883 821 L883 834 L869.2 849 L855.5 834 Z"/>
  <path d="M855.5 863.5 L883 863.5 L883 881.5 L869.2 891.2 L855.5 881.5 Z"/>
  <path d="M996.5 877.7 L1011 856.5 L1038 856.5 L1052 877.7 L1038 898.8 L1011 898.8 Z"/>
 </g>
 <g fill="#4d6f98" font-family="Liberation Sans" font-size="7.2" text-anchor="middle">
  <text x="982" y="725">Web</text>
  <text x="946.5" y="781.5">Ounce node</text>
  <text x="1017" y="781.5">Morse Unit</text>
  <text x="982" y="819">SMP</text>
  <text x="982" y="828.5">SCSI</text>
  <text x="946.5" y="880">DNS Move</text>
  <text x="1024" y="880">Paradox D</text>
  <text x="869" y="874.5">Strobe</text>
  <text x="869" y="883.5">A</text>
  <text x="869" y="827" font-size="5.2">Gateway</text>
 </g>
</svg>
<div class="a" style="left:306px;top:286px;width:288px;height:42px;background:#f1f1f1"></div>
<div class="a" style="left:563px;top:328px;width:31px;height:2px;background:#f1f1f1"></div>
<div class="a" style="left:306px;top:286px;width:288px;font-family:'Liberation Serif',serif;font-size:21px;line-height:22px;text-align:center;color:#000;white-space:nowrap;padding-top:0px">Multimodal, Stochastic<br>Symmetries for E-Commerce</div>
<div class="a" style="left:311px;top:339px;width:1px;height:16px;background:#000"></div>
<!-- /PAGES -->
<!-- STATUS -->
<div class="a" style="left:8px;top:917px;width:1484px;height:1px;background:#b4b4b4"></div>
<div id="status" class="a"></div>
<div class="a" style="left:14px;top:926px;font-size:10.4px;color:#fff;white-space:nowrap">PAGE 1 OF 3</div>
<div class="a" style="left:90px;top:926px;font-size:10.4px;color:#fff;white-space:nowrap">1085 WORDS</div>
<div class="a" style="left:1308px;top:926px;font-size:10.8px;color:#fff;white-space:nowrap">80%</div>
<svg class="a" style="left:1300px;top:917px" width="192" height="27">
 <circle cx="39.5" cy="13.5" r="5.5" fill="#9a9a9a"/>
 <rect x="36" y="13" width="7" height="1.2" fill="#474747"/>
 <rect x="51" y="11.5" width="116" height="4" rx="2" fill="#9a9a9a"/>
 <rect x="51" y="11.5" width="46" height="4" rx="2" fill="#1a6fd6"/>
 <circle cx="108.3" cy="13.5" r="3.6" fill="#9a9a9a"/>
 <circle cx="97.5" cy="13.5" r="5.5" fill="#1a6fd6"/>
 <circle cx="178.3" cy="13.5" r="5.5" fill="#9a9a9a"/>
 <rect x="174.8" y="12.9" width="7" height="1.2" fill="#474747"/>
 <rect x="177.7" y="10" width="1.2" height="7" fill="#474747"/>
</svg>
</body></html>
